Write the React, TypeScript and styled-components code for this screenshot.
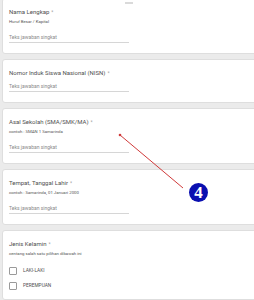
import styled, { createGlobalStyle } from 'styled-components'

const GlobalStyle = createGlobalStyle`
  html, body {
    margin: 0;
    padding: 0;
    background: #ebebeb;
    overflow: hidden;
  }

  body {
    font-family: Roboto, "Liberation Sans", sans-serif;
    color: #4a4a4a;
  }
`

const Page = styled.div`
  position: relative;
  width: 254px;
  height: 300px;
  overflow: hidden;
`

const Form = styled.div`
  display: flex;
  flex-direction: column;
  gap: 5px;

  width: 290px;
  margin: -2px 0 0 2px;
`

const Card = styled.section`
  position: relative;

  padding: 8px 6px 10px 6px;

  background: #ffffff;
  border: 1px solid #dedede;
  border-radius: 3px;
`

const DragHandle = styled.div`
  position: absolute;
  top: 3px;
  left: 122px;

  width: 8px;
  height: 2px;

  background-image: radial-gradient(circle, #dadada 0.6px, transparent 0.7px);
  background-size: 2px 1px;
`

const Title = styled.div`
  font-size: 6px;
  line-height: 10px;
  height: 10px;
  white-space: nowrap;
  color: #505050;
`

const Required = styled.span`
  margin-left: 2px;
  color: #a0a0a0;
  font-size: 5px;
  vertical-align: top;
`

const Helper = styled.div`
  font-size: 4.3px;
  line-height: 10px;
  height: 10px;
  white-space: nowrap;
  color: #555555;
`

const ShortAnswer = styled.div<{ $gap: number }>`
  width: 120px;
  margin-top: ${({ $gap }) => $gap}px;

  font-size: 5px;
  line-height: 10px;
  height: 10px;
  color: #8a8a8a;

  border-bottom: 1px solid #d6d6d6;
`

const Options = styled.div`
  display: flex;
  flex-direction: column;
  gap: 8px;

  margin-top: 8px;
`

const Option = styled.label`
  display: flex;
  align-items: center;
  gap: 6px;

  height: 7px;

  font-size: 4.8px;
  color: #505050;
`

const Box = styled.span`
  width: 6px;
  height: 6px;

  border: 1px solid #9a9a9a;
  border-radius: 1px;
`

const Annotation = styled.svg`
  position: absolute;
  top: 0;
  left: 0;
  pointer-events: none;
`

const Badge = styled.div`
  position: absolute;
  top: 183px;
  left: 189px;

  display: flex;
  align-items: center;
  justify-content: center;

  width: 19px;
  height: 19px;

  background: #0a0fb0;
  border-radius: 50%;

  color: #ffffff;
  font-family: "Liberation Serif", serif;
  font-weight: 700;
  font-size: 17px;
  line-height: 1;
`

type Question = {
  title: string
  helper?: string
}

const questions: Question[] = [
  { title: 'Nama Lengkap', helper: 'Huruf Besar / Kapital' },
  { title: 'Nomor Induk Siswa Nasional (NISN)' },
  { title: 'Asal Sekolah (SMA/SMK/MA)', helper: 'contoh : SMAN 1 Samarinda' },
  {
    title: 'Tempat, Tanggal Lahir',
    helper: 'contoh : Samarinda, 01 Januari 2000',
  },
]

const App = () => (
  <Page>
    <GlobalStyle />
    <Form>
      {questions.map((q, i) => (
        <Card key={q.title}>
          {i === 0 && <DragHandle />}
          <Title>
            {q.title}
            <Required>*</Required>
          </Title>
          {q.helper && <Helper>{q.helper}</Helper>}
          <ShortAnswer $gap={q.helper ? 5 : 3}>Teks jawaban singkat</ShortAnswer>
        </Card>
      ))}
      <Card>
        <Title>
          Jenis Kelamin
          <Required>*</Required>
        </Title>
        <Helper>centang salah satu pilihan dibawah ini</Helper>
        <Options>
          <Option>
            <Box />
            LAKI-LAKI
          </Option>
          <Option>
            <Box />
            PEREMPUAN
          </Option>
        </Options>
      </Card>
    </Form>
    <Annotation width="254" height="300" viewBox="0 0 254 300">
      <line x1="120" y1="135" x2="183" y2="188" stroke="#d03a3a" strokeWidth="1" />
      <circle cx="120" cy="135" r="1.3" fill="#d03a3a" />
    </Annotation>
    <Badge>4</Badge>
  </Page>
)

export default App
